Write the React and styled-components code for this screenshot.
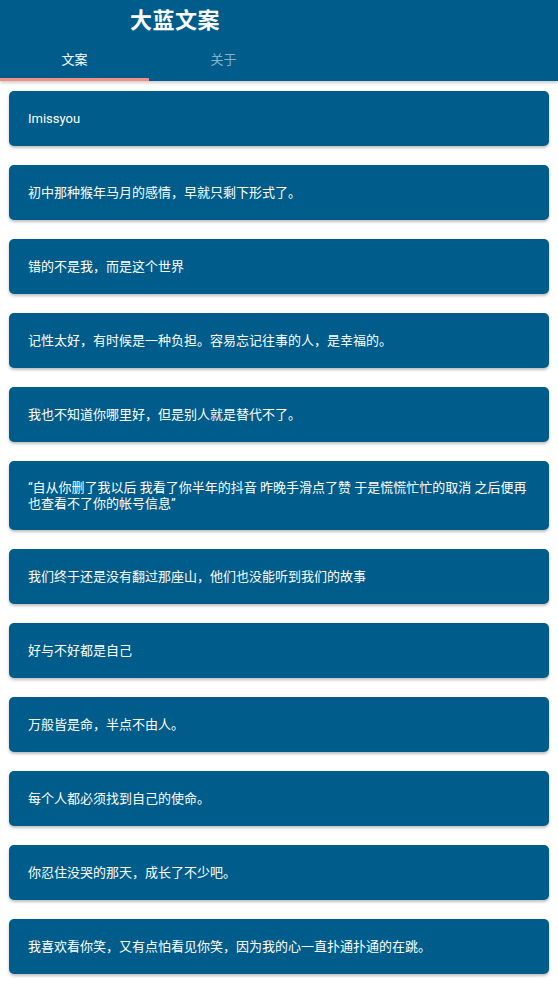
import { useState } from 'react'
import styled, { createGlobalStyle } from 'styled-components'

const quotes = [
  'Imissyou',
  '初中那种猴年马月的感情，早就只剩下形式了。',
  '错的不是我，而是这个世界',
  '记性太好，有时候是一种负担。容易忘记往事的人，是幸福的。',
  '我也不知道你哪里好，但是别人就是替代不了。',
  '“自从你删了我以后 我看了你半年的抖音 昨晚手滑点了赞 于是慌慌忙忙的取消 之后便再也查看不了你的帐号信息”',
  '我们终于还是没有翻过那座山，他们也没能听到我们的故事',
  '好与不好都是自己',
  '万般皆是命，半点不由人。',
  '每个人都必须找到自己的使命。',
  '你忍住没哭的那天，成长了不少吧。',
  '我喜欢看你笑，又有点怕看见你笑，因为我的心一直扑通扑通的在跳。',
  '',
]

const tabs = ['文案', '关于']

const App = () => {
  const [active, setActive] = useState(0)
  return (
    <>
      <GlobalStyle />
      <Header>
        <Title>大蓝文案</Title>
        <TabBar>
          {tabs.map((t, i) => (
            <Tab key={t} $active={i === active} onClick={() => setActive(i)}>
              {t}
            </Tab>
          ))}
        </TabBar>
      </Header>
      <List>
        {quotes.map((q, i) => (
          <Card key={i}>{q}</Card>
        ))}
      </List>
    </>
  )
}

const GlobalStyle = createGlobalStyle`
  html, body {
    margin: 0;
    padding: 0;
    background: #ffffff;
    font-family: Roboto, "Noto Sans CJK SC", sans-serif;
  }
  body {
    height: 992px;
    overflow: hidden;
  }
`

const Header = styled.header`
  background: #005c8a;
  box-shadow: 0 2px 3px rgba(0, 0, 0, 0.2);
  position: relative;
  z-index: 1;
`

const Title = styled.h1`
  margin: 0;
  height: 35px;
  display: flex;
  align-items: center;
  padding-left: 130px;
  color: #ffffff;
  font-size: 22px;
  font-weight: 700;
  letter-spacing: 0.5px;
`

const TabBar = styled.nav`
  display: flex;
  height: 46px;
`

const Tab = styled.div`
  width: 149px;
  display: flex;
  align-items: center;
  justify-content: center;
  box-sizing: border-box;
  padding-top: 3px;
  font-size: 13px;
  color: ${(p) => (p.$active ? '#ffffff' : 'rgba(255, 255, 255, 0.55)')};
  border-bottom: 3px solid ${(p) => (p.$active ? '#ef8f86' : 'transparent')};
  cursor: pointer;
`

const List = styled.main`
  display: flex;
  flex-direction: column;
  gap: 19px;
  padding: 10px 9px 20px;
`

const Card = styled.div`
  min-height: 55px;
  box-sizing: border-box;
  display: flex;
  align-items: center;
  padding: 18.5px 19px;
  background: #005c8a;
  color: #ffffff;
  font-size: 13px;
  line-height: 16px;
  border-radius: 5px;
  box-shadow: 0 2px 3px rgba(0, 0, 0, 0.25);
`

export default App
